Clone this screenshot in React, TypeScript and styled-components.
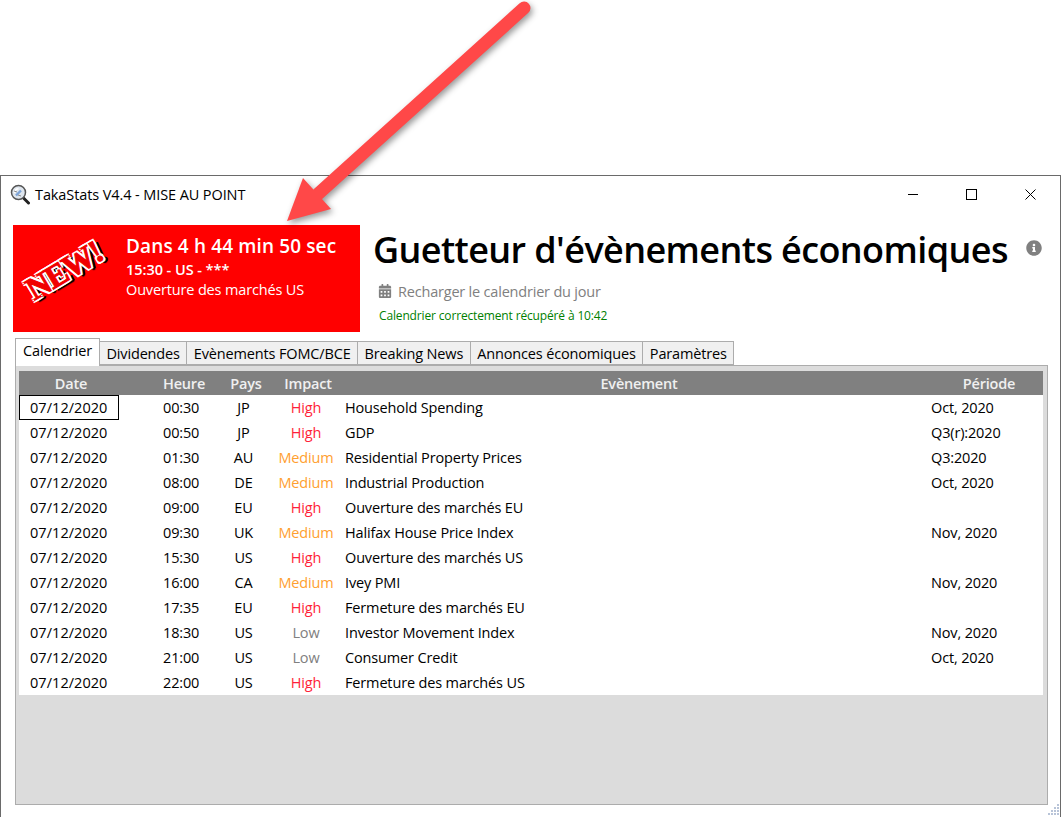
import React from "react";
import styled, { createGlobalStyle } from "styled-components";
import { FaCalendarAlt, FaInfoCircle } from "react-icons/fa";

const Global = createGlobalStyle`
  html, body { margin: 0; padding: 0; background: #fff; }
  body { font-family: "Open Sans", "Noto Sans", "Liberation Sans", sans-serif; color: #000; }
`;

const Page = styled.div`
  position: relative;
  width: 1061px;
  height: 817px;
  overflow: hidden;
  padding-top: 175px;
  box-sizing: border-box;
`;

const Arrow = styled.svg`
  position: absolute;
  left: 0;
  top: 0;
  pointer-events: none;
  filter: drop-shadow(2px 3px 3px rgba(0, 0, 0, 0.4));
`;

const Window = styled.div`
  height: 642px;
  box-sizing: border-box;
  border: 1px solid #6a6a6a;
  border-bottom: none;
  display: flex;
  flex-direction: column;
  position: relative;
`;

const TitleBar = styled.div`
  height: 36px;
  display: flex;
  align-items: center;
  padding-left: 9px;
  flex: none;
`;

const TitleText = styled.div`
  font-size: 14.5px;
  margin-left: 4px;
  letter-spacing: -0.1px;
  flex: 1;
`;

const Controls = styled.div`
  display: flex;
  align-items: center;
`;

const ControlButton = styled.div`
  width: 59px;
  height: 36px;
  display: flex;
  align-items: center;
  justify-content: center;
`;

const Header = styled.div`
  display: flex;
  height: 107px;
  margin-top: 13px;
  padding-left: 12px;
  flex: none;
`;

const Banner = styled.div`
  width: 347px;
  background: #ff0000;
  color: #fff;
  display: flex;
  flex: none;
`;

const BadgeSlot = styled.div`
  width: 113px;
  flex: none;
  display: flex;
  align-items: center;
  justify-content: center;
  padding: 0 10px 17px 0;
  box-sizing: border-box;
`;

const NewBadge = styled.span`
  font-family: "Liberation Serif", serif;
  font-weight: 700;
  font-size: 32px;
  letter-spacing: -1.2px;
  color: #f00000;
  transform: rotate(-31deg);
  display: inline-block;
  -webkit-text-stroke: 1px #f00000;
  text-shadow: 2px 0 0 #fff, -2px 0 0 #fff, 0 2px 0 #fff, 0 -2px 0 #fff,
    2px 2px 0 #fff, -2px -2px 0 #fff, 2px -2px 0 #fff, -2px 2px 0 #fff,
    3px 3px 0 #000, 4px 3px 0 #000, 3px 4px 1px #000;
`;

const BannerText = styled.div`
  display: flex;
  flex-direction: column;
  padding-top: 9px;
`;

const Countdown = styled.div`
  font-size: 19px;
  line-height: 25px;
  font-weight: 600;
  letter-spacing: 0.13px;
`;

const BannerTime = styled.div`
  font-size: 14.5px;
  line-height: 20px;
  font-weight: 600;
  letter-spacing: -0.05px;
  margin-top: 1px;
`;

const BannerEvent = styled.div`
  font-size: 14.5px;
  line-height: 19px;
  letter-spacing: -0.15px;
`;

const HeaderRight = styled.div`
  flex: 1;
  padding-left: 13px;
  display: flex;
  flex-direction: column;
  min-width: 0;
`;

const TitleRow = styled.div`
  display: flex;
  align-items: flex-start;
  height: 52px;
`;

const BigTitle = styled.h1`
  margin: 0;
  font-size: 36px;
  line-height: 50px;
  font-weight: 600;
  letter-spacing: -0.6px;
  white-space: nowrap;
`;

const InfoButton = styled.div`
  margin-left: 18px;
  margin-top: 15px;
  color: #808080;
  font-size: 16px;
  line-height: 0;
`;

const Reload = styled.div`
  display: flex;
  align-items: center;
  gap: 6px;
  margin-left: 5px;
  margin-top: 3px;
  height: 22px;
  font-size: 14.5px;
  letter-spacing: -0.2px;
  color: #808080;
`;

const Status = styled.div`
  margin-left: 6px;
  margin-top: 5px;
  font-size: 12px;
  line-height: 18px;
  letter-spacing: -0.15px;
  color: #008000;
`;

const TabStrip = styled.div`
  display: flex;
  align-items: flex-end;
  height: 28px;
  margin: 5px 0 0 14px;
  flex: none;
  position: relative;
  z-index: 1;
`;

const Tab = styled.div<{ $active?: boolean }>`
  box-sizing: border-box;
  height: ${(p) => (p.$active ? "28px" : "24px")};
  margin-bottom: ${(p) => (p.$active ? "-1px" : "0")};
  padding: 0 ${(p) => (p.$active ? "7px" : "6.5px")};
  margin-right: -1px;
  background: ${(p) => (p.$active ? "#fff" : "#f0f0f0")};
  border: 1px solid #acacac;
  border-bottom: ${(p) => (p.$active ? "none" : "1px solid #acacac")};
  font-size: 14.5px;
  letter-spacing: -0.15px;
  line-height: 23px;
  white-space: nowrap;
  position: relative;
  z-index: ${(p) => (p.$active ? 2 : 1)};
`;

const Panel = styled.div`
  box-sizing: border-box;
  width: 1033px;
  height: 440px;
  margin-left: 14px;
  border: 1px solid #acacac;
  background: #dcdcdc;
  padding: 5px 4px 0 3px;
  flex: none;
`;

const Grid = styled.div`
  background: #fff;
`;

const columns = "100px 106px 42px 78px 586px 112px";

const HeadRow = styled.div`
  display: grid;
  grid-template-columns: ${columns};
  height: 24px;
  background: #808080;
  color: #f0f0f0;
  font-weight: 600;
  font-size: 14.5px;
  letter-spacing: -0.2px;
  line-height: 25px;
`;

const Row = styled.div`
  display: grid;
  grid-template-columns: ${columns};
  height: 25px;
  font-size: 14.5px;
  letter-spacing: -0.15px;
  line-height: 25px;
`;

const HeadCell = styled.div<{ $pad?: number; $left?: boolean }>`
  text-align: ${(p) => (p.$left ? "left" : "center")};
  padding-left: ${(p) => p.$pad ?? 0}px;
  box-sizing: border-box;
`;

const DateCell = styled.div<{ $focused?: boolean }>`
  padding-left: 11px;
  box-sizing: border-box;
  letter-spacing: 0.05px;
  line-height: ${(p) => (p.$focused ? "23px" : "25px")};
  ${(p) => (p.$focused ? "border: 1px solid #000; padding-left: 10px;" : "")}
`;

const TimeCell = styled.div`
  padding-left: 44px;
`;

const CountryCell = styled.div`
  text-align: center;
  padding-right: 5px;
`;

const ImpactCell = styled.div<{ $level: string }>`
  text-align: center;
  color: ${(p) =>
    p.$level === "High" ? "#ff1f3a" : p.$level === "Medium" ? "#ffa030" : "#808080"};
`;

const TextCell = styled.div``;

const Grip = styled.svg`
  position: absolute;
  right: 1px;
  bottom: 1px;
`;

const rows: [string, string, string, string, string][] = [
  ["00:30", "JP", "High", "Household Spending", "Oct, 2020"],
  ["00:50", "JP", "High", "GDP", "Q3(r):2020"],
  ["01:30", "AU", "Medium", "Residential Property Prices", "Q3:2020"],
  ["08:00", "DE", "Medium", "Industrial Production", "Oct, 2020"],
  ["09:00", "EU", "High", "Ouverture des marchés EU", ""],
  ["09:30", "UK", "Medium", "Halifax House Price Index", "Nov, 2020"],
  ["15:30", "US", "High", "Ouverture des marchés US", ""],
  ["16:00", "CA", "Medium", "Ivey PMI", "Nov, 2020"],
  ["17:35", "EU", "High", "Fermeture des marchés EU", ""],
  ["18:30", "US", "Low", "Investor Movement Index", "Nov, 2020"],
  ["21:00", "US", "Low", "Consumer Credit", "Oct, 2020"],
  ["22:00", "US", "High", "Fermeture des marchés US", ""],
];

const tabs = ["Calendrier", "Dividendes", "Evènements FOMC/BCE", "Breaking News", "Annonces économiques", "Paramètres"];

const AppIcon = () => (
  <svg width="21" height="21" viewBox="0 0 21 21">
    <path d="M12 12.5l6.5 6.5" stroke="#222" strokeWidth="3" strokeLinecap="round" />
    <circle cx="8.5" cy="8.5" r="7" fill="#dfe6ee" stroke="#555" strokeWidth="1.5" />
    <path d="M4.5 9a4 4 0 0 1 4-4.2" stroke="#fff" strokeWidth="1.6" fill="none" />
    <path d="M6 11.5l5-5" stroke="#7da4d8" strokeWidth="2.4" />
    <path d="M4 7l3 1M8 11l3 1" stroke="#888" strokeWidth="1" />
  </svg>
);

export default function App() {
  return (
    <Page>
      <Global />
      <Window>
        <TitleBar>
          <AppIcon />
          <TitleText>TakaStats V4.4 - MISE AU POINT</TitleText>
          <Controls>
            <ControlButton>
              <svg width="10" height="10" viewBox="0 0 10 10"><path d="M0 5.5h10" stroke="#000" /></svg>
            </ControlButton>
            <ControlButton>
              <svg width="11" height="11" viewBox="0 0 11 11"><rect x="0.5" y="0.5" width="10" height="10" fill="none" stroke="#000" /></svg>
            </ControlButton>
            <ControlButton>
              <svg width="11" height="11" viewBox="0 0 11 11"><path d="M0.5 0.5l10 10M10.5 0.5l-10 10" stroke="#000" /></svg>
            </ControlButton>
          </Controls>
        </TitleBar>
        <Header>
          <Banner>
            <BadgeSlot>
              <NewBadge>NEW!</NewBadge>
            </BadgeSlot>
            <BannerText>
              <Countdown>Dans 4 h 44 min 50 sec</Countdown>
              <BannerTime>15:30 - US - ***</BannerTime>
              <BannerEvent>Ouverture des marchés US</BannerEvent>
            </BannerText>
          </Banner>
          <HeaderRight>
            <TitleRow>
              <BigTitle>Guetteur d'évènements économiques</BigTitle>
              <InfoButton><FaInfoCircle /></InfoButton>
            </TitleRow>
            <Reload><FaCalendarAlt size={14} />Recharger le calendrier du jour</Reload>
            <Status>Calendrier correctement récupéré à 10:42</Status>
          </HeaderRight>
        </Header>
        <TabStrip>
          {tabs.map((t, i) => (
            <Tab key={t} $active={i === 0}>{t}</Tab>
          ))}
        </TabStrip>
        <Panel>
          <Grid>
            <HeadRow>
              <HeadCell $pad={4}>Date</HeadCell>
              <HeadCell $left $pad={44}>Heure</HeadCell>
              <HeadCell>Pays</HeadCell>
              <HeadCell $pad={4}>Impact</HeadCell>
              <HeadCell $pad={2}>Evènement</HeadCell>
              <HeadCell $pad={4}>Période</HeadCell>
            </HeadRow>
            {rows.map((r, i) => (
              <Row key={r[0]}>
                <DateCell $focused={i === 0}>07/12/2020</DateCell>
                <TimeCell>{r[0]}</TimeCell>
                <CountryCell>{r[1]}</CountryCell>
                <ImpactCell $level={r[2]}>{r[2]}</ImpactCell>
                <TextCell>{r[3]}</TextCell>
                <TextCell>{r[4]}</TextCell>
              </Row>
            ))}
          </Grid>
        </Panel>
        <Grip width="13" height="13" viewBox="0 0 13 13">
          {[[11,1],[11,4],[8,4],[11,7],[8,7],[5,7],[11,10],[8,10],[5,10],[2,10]].map(([x,y]) => (
            <rect key={`${x}-${y}`} x={x} y={y} width="2" height="2" fill="#b8c4d8" />
          ))}
        </Grip>
      </Window>
      <Arrow width="1061" height="240" viewBox="0 0 1061 240">
        <path d="M524 8L318 194" stroke="#ff4848" strokeWidth="13" strokeLinecap="round" fill="none" />
        <path d="M287 221L303 178L331 209Z" fill="#ff4848" />
      </Arrow>
    </Page>
  );
}
